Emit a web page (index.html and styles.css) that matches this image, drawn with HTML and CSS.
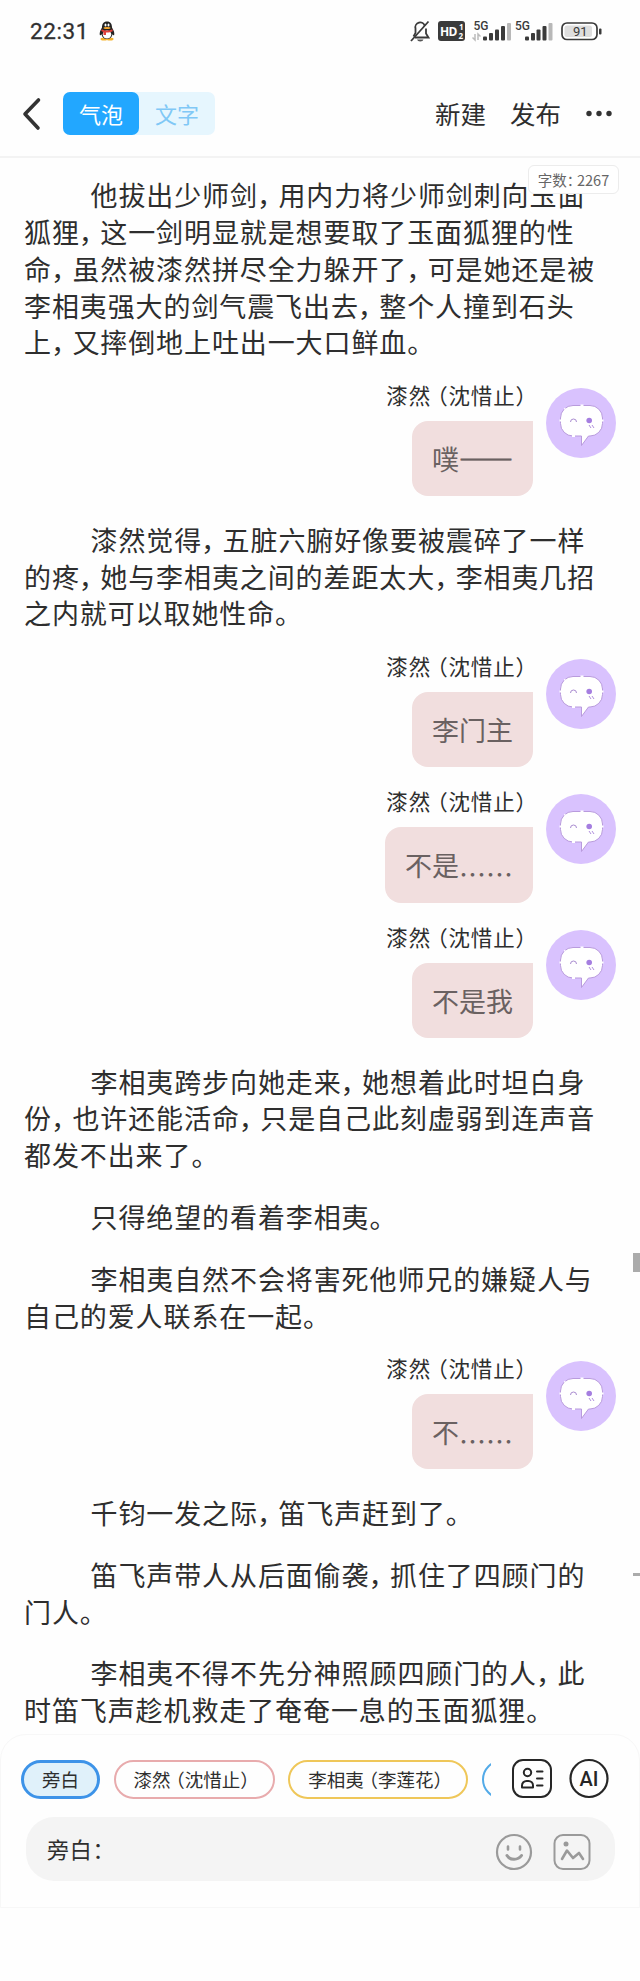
FILE: index.html
```
<!DOCTYPE html>
<html lang="zh-CN">
<head>
  <meta charset="UTF-8" />
  <meta name="viewport" content="width=device-width, initial-scale=1.0" />
  <title>对话编辑</title>
  <link rel="stylesheet" href="styles.css">
</head>
<body>
  <!-- avatar shared by every message -->
  <svg class="defs" width="0" height="0">
    <symbol id="avatar" viewBox="0 0 70 70">
      <circle cx="35" cy="35" r="35" fill="#d9c2fe"/>
      <path d="M27 17.500H44a12.500 12.500 0 0 1 12.500 12.500V35.500a12.500 12.500 0 0 1-12.500 12.500H42.500L35.500 57.500V48H27a12.500 12.500 0 0 1-12.500-12.500V30A12.500 12.500 0 0 1 27 17.500z" fill="#fff" stroke="#b99bdd" stroke-width="1"/>
      <path d="M34.500 17.500h3M14.500 31.500v2M56.500 31.500v2M26 48h3M18.500 21.500l1-1" stroke="#fff" stroke-width="2" fill="none"/>
      <path d="M24.500 34a3 3 0 0 1 6 0" fill="none" stroke="#a98bd0" stroke-width="1"/>
      <circle cx="43.200" cy="32.500" r="2.800" fill="#a57ee0"/>
      <path d="M43 37l2 3M46 37l2 3" stroke="#b08fdd" stroke-width="1"/>
    </symbol>
  </svg>

  <header class="header">
    <div class="status">
      <span class="time">22:31</span>
      <svg class="penguin" width="16" height="20" viewBox="0 0 16 20">
        <ellipse cx="5" cy="18" rx="3.500" ry="1.500" fill="#f5b32d"/>
        <ellipse cx="11" cy="18" rx="3.500" ry="1.500" fill="#f5b32d"/>
        <path d="M8 0.500c3.600 0 5 2.600 5 6 1.500 2.500 2.800 5 2.200 7.500-.5.800-1.200.2-1.700-.8C13 16 11 18 8 18s-5-2-5.500-4.800c-.5 1-1.200 1.600-1.700.8C.2 11.500 1.500 9 3 6.500c0-3.400 1.400-6 5-6z" fill="#222"/>
        <ellipse cx="8" cy="13.500" rx="4.300" ry="4" fill="#fff"/>
        <ellipse cx="6.500" cy="4" rx="1" ry="1.600" fill="#fff"/>
        <ellipse cx="9.500" cy="4" rx="1" ry="1.600" fill="#fff"/>
        <ellipse cx="8" cy="7" rx="3.500" ry="1" fill="#f5a62d"/>
        <path d="M2.600 8.300c3 1.700 7.800 1.700 10.800 0l.4 2c-2 1-4.500 1.400-6.800 1.300V14H4.500v-3L2.300 10z" fill="#e2403a"/>
      </svg>
      <svg class="status-icons" width="194" height="24" viewBox="0 0 194 24">
        <g fill="none" stroke="#3a3a3a" stroke-width="1.800">
          <path d="M3.500 17.500L5.500 14V9.500a4.800 4.800 0 0 1 9.300-2.500M16 9.500v5l2.500 4H5"/>
          <path d="M1 22L18.500 2.500"/>
        </g>
        <path d="M7 20.500h6.500a3.300 2.500 0 0 1-6.500 0z" fill="#555"/>
        <rect x="28" y="2" width="27" height="20" rx="3" fill="#3b3b3b"/>
        <text x="30" y="16.500" class="hd">HD</text>
        <text x="49" y="11" class="hd-num">1</text>
        <text x="48.500" y="19.800" class="hd-num">2</text>
        <text x="63.500" y="11" class="net">5G</text>
        <path d="M65 15v6l-2.500-2.500M68 21v-6l2.500 2.500" fill="none" stroke="#bbb" stroke-width="1.500"/>
        <g fill="#3a3a3a">
          <rect x="73" y="17.500" width="4" height="4" rx="1"/>
          <rect x="79" y="14" width="4" height="7.500" rx="1"/>
          <rect x="85" y="10.500" width="4" height="11" rx="1"/>
          <rect x="91" y="7" width="4" height="14.500" rx="1"/>
          <rect x="115" y="17.500" width="4" height="4" rx="1"/>
          <rect x="121" y="14" width="4" height="7.500" rx="1"/>
          <rect x="126.500" y="10.500" width="4" height="11" rx="1"/>
          <rect x="132.500" y="7" width="4" height="14.500" rx="1"/>
        </g>
        <rect x="97" y="4" width="4" height="17.500" rx="1" fill="#b8b8b8"/>
        <rect x="138.500" y="4" width="4" height="17.500" rx="1" fill="#b8b8b8"/>
        <text x="105" y="11" class="net">5G</text>
        <rect x="152" y="4" width="35" height="16.500" rx="5" fill="#fff" stroke="#3a3a3a" stroke-width="1.700"/>
        <rect x="154.500" y="6.500" width="27.500" height="11.500" rx="2.500" fill="#dedede"/>
        <rect x="189" y="9.500" width="2.500" height="6" rx="1" fill="#3a3a3a"/>
        <text x="163" y="17" class="battery">91</text>
      </svg>
    </div>

    <div class="toolbar">
      <svg class="back" width="22" height="34" viewBox="0 0 22 34">
        <path d="M18.500 3L5 17L18 31" fill="none" stroke="#333" stroke-width="3.600" stroke-linecap="round" stroke-linejoin="round"/>
      </svg>
      <div class="tabs">
        <span class="tab active">气泡</span>
        <span class="tab">文字</span>
      </div>
      <div class="actions">
        <span>新建</span>
        <span>发布</span>
        <svg width="28" height="8" viewBox="0 0 28 8" fill="#333">
          <circle cx="4" cy="3.500" r="2.700"/><circle cx="14" cy="3.500" r="2.700"/><circle cx="24" cy="3.500" r="2.700"/>
        </svg>
      </div>
    </div>
    <div class="count">字数<i class="colon">：</i>2267</div>
  </header>

  <main class="chat">
    <p>他拔出少师剑<i>，</i>用内力将少师剑刺向玉面<br>狐狸<i>，</i>这一剑明显就是想要取了玉面狐狸的性<br>命<i>，</i>虽然被漆然拼尽全力躲开了<i>，</i>可是她还是被<br>李相夷强大的剑气震飞出去<i>，</i>整个人撞到石头<br>上<i>，</i>又摔倒地上吐出一大口鲜血。</p>

    <div class="message">
      <div class="content">
        <div class="name">漆然<i class="l">（</i>沈惜止<i class="r">）</i></div>
        <div class="bubble">噗<span class="dash">——</span></div>
      </div>
      <svg class="avatar"><use href="#avatar"/></svg>
    </div>

    <p>漆然觉得<i>，</i>五脏六腑好像要被震碎了一样<br>的疼<i>，</i>她与李相夷之间的差距太大<i>，</i>李相夷几招<br>之内就可以取她性命。</p>

    <div class="message">
      <div class="content">
        <div class="name">漆然<i class="l">（</i>沈惜止<i class="r">）</i></div>
        <div class="bubble">李门主</div>
      </div>
      <svg class="avatar"><use href="#avatar"/></svg>
    </div>
    <div class="message">
      <div class="content">
        <div class="name">漆然<i class="l">（</i>沈惜止<i class="r">）</i></div>
        <div class="bubble">不是<span class="dots">……</span></div>
      </div>
      <svg class="avatar"><use href="#avatar"/></svg>
    </div>
    <div class="message">
      <div class="content">
        <div class="name">漆然<i class="l">（</i>沈惜止<i class="r">）</i></div>
        <div class="bubble">不是我</div>
      </div>
      <svg class="avatar"><use href="#avatar"/></svg>
    </div>

    <p>李相夷跨步向她走来<i>，</i>她想着此时坦白身<br>份<i>，</i>也许还能活命<i>，</i>只是自己此刻虚弱到连声音<br>都发不出来了。</p>
    <p>只得绝望的看着李相夷。</p>
    <p>李相夷自然不会将害死他师兄的嫌疑人与<br>自己的爱人联系在一起。</p>

    <div class="message">
      <div class="content">
        <div class="name">漆然<i class="l">（</i>沈惜止<i class="r">）</i></div>
        <div class="bubble">不<span class="dots">……</span></div>
      </div>
      <svg class="avatar"><use href="#avatar"/></svg>
    </div>

    <p>千钧一发之际<i>，</i>笛飞声赶到了。</p>
    <p>笛飞声带人从后面偷袭<i>，</i>抓住了四顾门的<br>门人。</p>
    <p>李相夷不得不先分神照顾四顾门的人<i>，</i>此<br>时笛飞声趁机救走了奄奄一息的玉面狐狸。</p>

    <div class="scroll-thumb"></div>
    <div class="scroll-mark"></div>
  </main>

  <footer class="panel">
    <div class="roles">
      <div class="chips">
        <span class="chip narrator">旁白</span>
        <span class="chip pink">漆然<i class="l">（</i>沈惜止<i class="r">）</i></span>
        <span class="chip yellow">李相夷<i class="l">（</i>李莲花<i class="r">）</i></span>
        <span class="chip blue"></span>
      </div>
      <svg class="cast" width="42" height="42" viewBox="0 0 42 42" fill="none" stroke="#262626" stroke-width="2">
        <rect x="2" y="2" width="38" height="37" rx="10"/>
        <circle cx="16.500" cy="14.500" r="3.700"/>
        <path d="M11 29.500v-2a4.500 4.500 0 0 1 4.500-4.500h2a4.500 4.500 0 0 1 4.500 4.500v2z" stroke-linejoin="round"/>
        <path d="M26 13.500h5.500M26 20.500h5.500M26 27.500h5.500" stroke-linecap="round"/>
      </svg>
      <svg class="ai" width="42" height="42" viewBox="0 0 42 42">
        <circle cx="21" cy="20.500" r="18.500" fill="none" stroke="#262626" stroke-width="2.200"/>
        <text x="21" y="28" text-anchor="middle" class="ai-text">AI</text>
      </svg>
    </div>
    <div class="input">
      <span class="prompt">旁白<i class="colon">：</i></span>
      <svg width="38" height="38" viewBox="0 0 38 38" fill="none" stroke="#9a9a9a" stroke-linecap="round">
        <circle cx="19" cy="19" r="17" stroke-width="2.200"/>
        <path d="M13 13.500v3M25 13.500v3" stroke-width="2.600"/>
        <path d="M12 22.500c3 5 11 5 14.500 0" stroke-width="3"/>
      </svg>
      <svg width="38" height="38" viewBox="0 0 38 38" fill="none" stroke="#9a9a9a" stroke-linecap="round" stroke-linejoin="round">
        <rect x="1.500" y="2" width="35" height="34" rx="8.500" stroke-width="2"/>
        <circle cx="13" cy="11" r="2.500" fill="#9a9a9a" stroke="none"/>
        <path d="M9 26L14 17.500L20 25L26 20L30 26" stroke-width="2.600"/>
      </svg>
    </div>
  </footer>
</body>
</html>
```
FILE: styles.css
```
* {
  box-sizing: border-box;
}
body {
  margin: 0;
  height: 1981px;
  overflow: hidden;
  background: #fefefe;
  color: #2e2e2e;
  font-family: "Noto Sans CJK SC", sans-serif;
  white-space: nowrap;
}
/* half-width punctuation */
i {
  font-style: normal;
  font-feature-settings: "halt";
}
svg {
  display: block;
  flex: none;
}
.defs {
  position: absolute;
}

/* header */
.header {
  position: relative;
  height: 158px;
  border-bottom: 2px solid #f3f3f3;
}
.status {
  display: flex;
  align-items: center;
  height: 61px;
  padding: 0 36px 0 30px;
}
.time {
  font-family: Roboto, sans-serif;
  font-size: 22.500px;
  font-weight: 400;
  line-height: 24px;
  letter-spacing: 0.600px;
  color: #303030;
  -webkit-text-stroke: 0.300px #303030;
  width: 69px;
}
.status-icons {
  margin-left: auto;
}
.hd, .hd-num {
  font-family: "Open Sans", sans-serif;
  font-weight: 700;
  font-size: 12px;
  fill: #fff;
}
.hd {
  letter-spacing: -0.800px;
}
.hd-num {
  font-size: 8px;
}
.net {
  font-family: Roboto, sans-serif;
  font-weight: 500;
  font-size: 12px;
  fill: #3a3a3a;
}
.battery {
  font-family: Roboto, sans-serif;
  font-size: 13px;
  font-weight: 400;
  fill: #3a3a3a;
}
.toolbar {
  display: flex;
  align-items: center;
  height: 105px;
  padding: 0 27px 0 20px;
}
.tabs {
  display: flex;
  width: 152px;
  height: 43px;
  margin-left: 21px;
  border-radius: 7px;
  background: #e6f6fe;
}
.tab {
  flex: 1;
  line-height: 42px;
  text-align: center;
  font-size: 22px;
  color: #80c8f6;
}
.tab.active {
  border-radius: 7px;
  background: #22a7ff;
  color: #fff;
}
.actions {
  display: flex;
  align-items: center;
  gap: 24px;
  margin-left: auto;
  font-size: 25.500px;
  line-height: 36px;
}
.actions span {
  padding-bottom: 2px;
}
.count {
  position: absolute;
  top: 165px;
  right: 21px;
  z-index: 1;
  width: 91px;
  height: 29px;
  border: 1px solid #ececec;
  border-radius: 6px;
  background: #fff;
  color: #666;
  font-size: 14.500px;
  line-height: 27px;
  text-align: center;
}
.count .colon {
  margin-right: 3px;
}

/* story */
.chat {
  position: relative;
  height: 1576px;
  padding: 19.300px 24px 0 24px;
}
.chat p {
  margin: 0 0 25px;
  font-size: 27px;
  line-height: 36.800px;
  letter-spacing: 0.900px;
  text-indent: 66.500px;
}
.chat p i {
  margin-left: -1px;
  margin-right: 7.100px;
}
.message {
  display: flex;
  justify-content: flex-end;
  gap: 13px;
  height: 108.500px;
  margin: 26.500px 0 27px;
}
.message + p {
  margin-top: -1.500px;
}
.content {
  display: flex;
  flex-direction: column;
  align-items: flex-end;
}
.name {
  height: 33px;
  padding-right: 6px;
  font-size: 21.500px;
  line-height: 14px;
  letter-spacing: 0.800px;
}
.l {
  margin-left: 6px;
}
.bubble {
  height: 75.500px;
  padding: 0 20px;
  border-radius: 16px 0 16px 16px;
  background: #f1dede;
  color: #6a6161;
  font-size: 27px;
  line-height: 76px;
}
.dash {
  -webkit-text-stroke: 0.800px #6a6161;
}
/* the CJK ellipsis sits mid-line, drop it to the baseline */
.dots {
  line-height: 0;
  vertical-align: -9px;
}
.avatar {
  width: 70px;
  height: 70px;
}
.scroll-thumb, .scroll-mark {
  position: absolute;
  right: 0;
  width: 7px;
  background: #ababab;
}
.scroll-thumb {
  top: 1095px;
  height: 19px;
}
.scroll-mark {
  top: 1415px;
  height: 3px;
}

/* bottom panel */
.panel {
  position: relative;
  height: 174px;
  border: 1px solid #f7f7f7;
  border-radius: 26px 26px 0 0;
  background: #fefefe;
  padding: 23px 24px 0 20px;
}
.roles {
  display: flex;
  height: 42px;
}
.chips {
  display: flex;
  align-items: center;
  gap: 13.500px;
  width: 470px;
  overflow: hidden;
}
.chip {
  flex: none;
  height: 39px;
  border: 2px solid;
  border-radius: 20px;
  font-size: 18.500px;
  line-height: 34px;
  text-align: center;
}
.chip .l {
  margin-left: 5px;
}
.chip .r {
  margin-right: 5px;
}
.narrator {
  width: 79px;
  border: 3px solid #3d93e8;
  background: #e0f1fa;
  line-height: 32px;
}
.pink {
  width: 161px;
  border-color: #e8abad;
}
.yellow {
  width: 180px;
  border-color: #efc759;
}
.blue {
  width: 160px;
  border-color: #52aae8;
}
.cast {
  margin-left: 20px;
}
.ai {
  margin-left: 15px;
}
.ai-text {
  font-family: Roboto, sans-serif;
  font-size: 20px;
  font-weight: 500;
  fill: #262626;
}
.input {
  display: flex;
  align-items: center;
  height: 64px;
  margin: 17px 0 0 5px;
  padding: 6px 24px 0 21px;
  border-radius: 28px;
  background: #f4f4f4;
  gap: 20px;
}
.prompt {
  flex: 1;
  padding-bottom: 8px;
  font-size: 22px;
  letter-spacing: 0.800px;
}
```
